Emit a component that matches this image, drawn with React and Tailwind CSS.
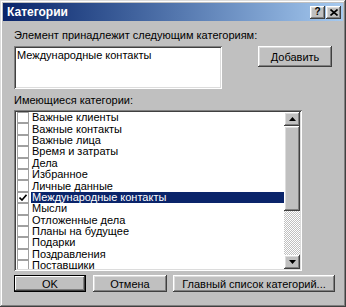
const FONT = "font-['Liberation_Sans',Arial,sans-serif]";

const RAISED =
  "shadow-[inset_-1px_-1px_#404040,inset_1px_1px_#ffffff,inset_-2px_-2px_#808080,inset_2px_2px_#dcdcdc]";
const SUNKEN =
  "shadow-[inset_1px_1px_#808080,inset_-1px_-1px_#ffffff,inset_2px_2px_#404040,inset_-2px_-2px_#dcdcdc]";

const CATEGORIES = [
  "Важные клиенты",
  "Важные контакты",
  "Важные лица",
  "Время и затраты",
  "Дела",
  "Избранное",
  "Личные данные",
  "Международные контакты",
  "Мысли",
  "Отложенные дела",
  "Планы на будущее",
  "Подарки",
  "Поздравления",
  "Поставщики",
];

function TitleButton({ children }) {
  return (
    <div className={`flex h-[13px] w-[15px] items-center justify-center bg-[#c0c0c0] ${RAISED}`}>
      {children}
    </div>
  );
}

function Arrow({ up }) {
  return (
    <svg width="7" height="4" viewBox="0 0 7 4">
      <path d={up ? "M3.5 0L7 4H0Z" : "M0 0H7L3.5 4Z"} fill="#000" />
    </svg>
  );
}

function Button({ children, width, isDefault }) {
  return (
    <div
      className={`flex h-[17px] items-center justify-center bg-[#c0c0c0] text-[11px] text-black ${
        isDefault
          ? "shadow-[inset_0_0_0_1px_#000,inset_-2px_-2px_#404040,inset_2px_2px_#ffffff,inset_-3px_-3px_#808080]"
          : RAISED
      } ${width}`}
    >
      {children}
    </div>
  );
}

export default function App() {
  return (
    <div
      className={`flex h-[307px] w-[346px] flex-col bg-[#c0c0c0] p-[3px] ${FONT} shadow-[inset_-1px_-1px_#404040,inset_1px_1px_#dcdcdc,inset_-2px_-2px_#808080,inset_2px_2px_#ffffff]`}
    >
      {/* title bar */}
      <div className="flex h-[18px] items-center justify-between bg-gradient-to-r from-[#0a246a] to-[#a6caf0] pl-[4px] pr-[2px]">
        <span className="text-[12px] font-bold leading-none text-white">Категории</span>
        <div className="flex gap-[1px]">
          <TitleButton>
            <span className="text-[10px] font-bold leading-none text-black">?</span>
          </TitleButton>
          <TitleButton>
            <svg width="8" height="7" viewBox="0 0 8 7">
              <path d="M0.5 0.5L7.5 6.5M7.5 0.5L0.5 6.5" stroke="#000" strokeWidth="1.6" />
            </svg>
          </TitleButton>
        </div>
      </div>

      {/* body */}
      <div className="flex flex-col pl-[11px] pt-[8px] text-[11px] leading-[12px] text-black">
        <div>Элемент принадлежит следующим категориям:</div>

        <div className="mt-[5px] flex items-start">
          <div className={`h-[43px] w-[208px] bg-white px-[3px] pt-[3px] ${SUNKEN}`}>
            Международные контакты
          </div>
          <div className="ml-[36px]">
            <div
              className={`flex h-[21px] w-[74px] items-center justify-center bg-[#c0c0c0] text-[11px] ${RAISED}`}
            >
              Добавить
            </div>
          </div>
        </div>

        <div className="mt-[5px]">Имеющиеся категории:</div>

        {/* list box */}
        <div className={`mt-[4px] flex h-[161px] w-[288px] bg-white p-[2px] ${SUNKEN}`}>
          <div className="flex-1 overflow-hidden">
            {CATEGORIES.map((c) => {
              const sel = c === "Международные контакты";
              return (
                <div key={c} className="flex h-[11.4px] items-center">
                  <div className="ml-[1px] flex h-[11.4px] w-[12px] shrink-0 items-center justify-center border border-[#a0a0a0] bg-white">
                    {sel ? (
                      <svg width="8" height="7" viewBox="0 0 8 7">
                        <path d="M0.5 3.5L3 6L7.5 0.8" stroke="#000" strokeWidth="1.6" fill="none" />
                      </svg>
                    ) : null}
                  </div>
                  <div
                    className={`ml-[2px] flex h-full flex-1 items-center pl-[1px] leading-none ${
                      sel ? "bg-[#0a246a] text-white" : "text-black"
                    }`}
                  >
                    {c}
                  </div>
                </div>
              );
            })}
          </div>

          {/* scrollbar */}
          <div className="flex w-[16px] shrink-0 flex-col">
            <div className={`flex h-[14px] items-center justify-center bg-[#c0c0c0] ${RAISED}`}>
              <Arrow up />
            </div>
            <div className={`h-[85px] bg-[#c0c0c0] ${RAISED}`} />
            <div className="flex-1 bg-[image:repeating-conic-gradient(#ffffff_0%_25%,#c0c0c0_0%_50%)] [background-size:2px_2px]" />
            <div className={`flex h-[14px] items-center justify-center bg-[#c0c0c0] ${RAISED}`}>
              <Arrow />
            </div>
          </div>
        </div>

        {/* bottom buttons */}
        <div className="mt-[4px] flex">
          <Button width="w-[72px]" isDefault>
            OK
          </Button>
          <div className="ml-[7px]">
            <Button width="w-[74px]">Отмена</Button>
          </div>
          <div className="ml-[6px]">
            <Button width="w-[162px]">Главный список категорий...</Button>
          </div>
        </div>
      </div>
    </div>
  );
}
